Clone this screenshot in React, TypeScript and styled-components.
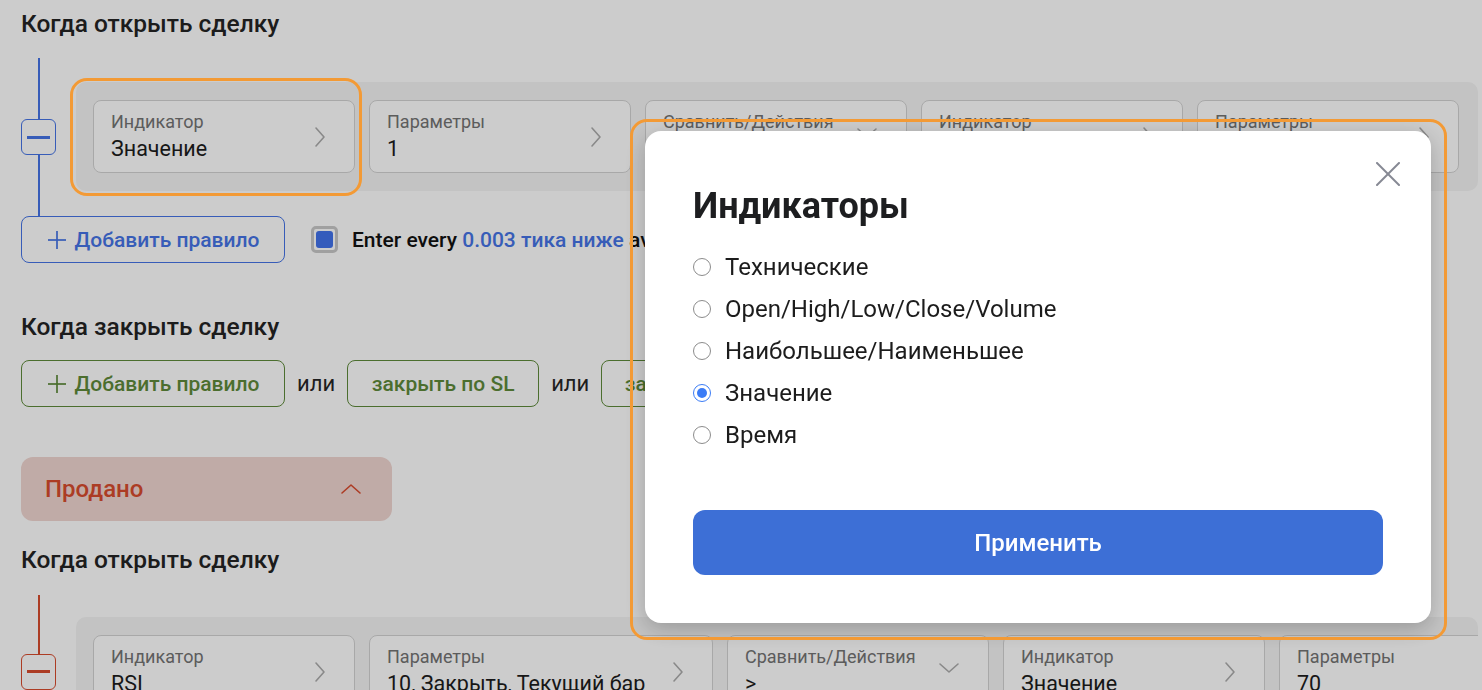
import styled, { createGlobalStyle } from "styled-components";

const BLUE = "#4574e6";
const GREEN = "#5e8a3a";
const RED = "#d84b2e";

const GlobalStyle = createGlobalStyle`
  html, body {
    margin: 0;
    padding: 0;
    background: #ffffff;
    overflow: hidden;
  }
  body {
    font-family: Roboto, "Noto Sans", "Liberation Sans", sans-serif;
    color: #242424;
  }
  * {
    box-sizing: border-box;
  }
`;

const Page = styled.div`
  width: 1482px;
  height: 690px;
  overflow: hidden;
  padding: 10px 4px 0 21px;
  display: flex;
  flex-direction: column;

  & > * {
    flex-shrink: 0;
  }
`;

const Heading = styled.h2<{ $gap?: number }>`
  margin: ${(p) => p.$gap ?? 0}px 0 0;
  font-size: 24.5px;
  line-height: 28px;
  font-weight: 500;
  color: #242424;
`;

const RuleRow = styled.div<{ $gap: number }>`
  display: flex;
  gap: 20px;
  margin-top: ${(p) => p.$gap}px;
`;

const Rail = styled.div`
  width: 35px;
  flex-shrink: 0;
  display: flex;
  flex-direction: column;
  align-items: center;
`;

const RailLine = styled.div<{ $color: string }>`
  flex: 1;
  width: 2px;
  background: ${(p) => p.$color};
`;

const MinusButton = styled.button<{ $color: string }>`
  width: 35px;
  height: 36px;
  padding: 0;
  border: 1px solid ${(p) => p.$color};
  border-radius: 6px;
  background: #ffffff;
  display: flex;
  align-items: center;
  justify-content: center;

  span {
    width: 23px;
    height: 3px;
    background: ${(p) => p.$color};
  }
`;

const Conditions = styled.div<{ $top: number; $bottom: number }>`
  flex: 1;
  min-width: 0;
  margin: ${(p) => p.$top}px 0 ${(p) => p.$bottom}px;
  padding: 18px 17px;
  background: #f4f4f4;
  border-radius: 10px;
  display: flex;
  gap: 14px;
  overflow: hidden;
`;

const Field = styled.div<{ $width?: number }>`
  width: ${(p) => p.$width ?? 262}px;
  height: 73px;
  flex-shrink: 0;
  background: #ffffff;
  border: 1px solid #d3d3d3;
  border-radius: 8px;
  padding: 0 28px 0 17px;
  display: flex;
  align-items: center;
  justify-content: space-between;
`;

const FieldText = styled.div`
  align-self: stretch;
  padding-top: 11px;
  display: flex;
  flex-direction: column;
  gap: 5px;
  white-space: nowrap;
`;

const FieldLabel = styled.span`
  font-size: 18px;
  line-height: 20px;
  color: #737373;
`;

const FieldValue = styled.span`
  font-size: 21.5px;
  line-height: 24px;
  color: #1c1c1c;
`;

const Chevron = styled.svg<{ $color?: string }>`
  flex-shrink: 0;
  fill: none;
  stroke: ${(p) => p.$color ?? "#acacac"};
  stroke-width: 1.6;
  stroke-linecap: round;
  stroke-linejoin: round;
`;

const ChevronRight = () => (
  <Chevron width="12" height="22" viewBox="0 0 12 22">
    <polyline points="2,2 10,11 2,20" />
  </Chevron>
);

const ChevronDown = () => (
  <Chevron width="22" height="12" viewBox="0 0 22 12" style={{ marginTop: -8 }}>
    <polyline points="2,2 11,10 20,2" />
  </Chevron>
);

const ActionsRow = styled.div<{ $gap?: number }>`
  display: flex;
  align-items: center;
  gap: 12px;
  margin-top: ${(p) => p.$gap ?? 0}px;
  white-space: nowrap;
`;

const OutlineButton = styled.button<{ $color: string; $width: number }>`
  width: ${(p) => p.$width}px;
  height: 47px;
  flex-shrink: 0;
  padding: 0;
  border: 1px solid ${(p) => p.$color};
  border-radius: 8px;
  background: #ffffff;
  color: ${(p) => p.$color};
  font-family: inherit;
  font-size: 21px;
  font-weight: 500;
  display: flex;
  align-items: center;
  justify-content: center;
  gap: 8px;

  svg {
    stroke: ${(p) => p.$color};
  }
`;

const PlusIcon = () => (
  <svg width="20" height="20" viewBox="0 0 20 20" fill="none" strokeWidth="1.7">
    <line x1="10" y1="1" x2="10" y2="19" />
    <line x1="1" y1="10" x2="19" y2="10" />
  </svg>
);

const Or = styled.span`
  font-size: 22px;
  color: #262626;
`;

const CheckBox = styled.span`
  width: 27px;
  height: 27px;
  margin-left: 14px;
  border: 3px solid #c9c9c9;
  border-radius: 5px;
  padding: 2px;
  display: flex;

  &::after {
    content: "";
    flex: 1;
    border-radius: 3px;
    background: #4272ec;
  }
`;

const EnterText = styled.span`
  margin-left: 2px;
  font-size: 21px;
  font-weight: 500;
  color: #111111;

  b {
    font-weight: 500;
    color: ${BLUE};
  }
`;

const SidePanel = styled.div`
  width: 371px;
  height: 64px;
  margin-top: 50px;
  padding: 0 30px 0 24px;
  border-radius: 12px;
  background: #f1d6d1;
  display: flex;
  align-items: center;
  justify-content: space-between;
  color: ${RED};
  font-size: 24px;
  font-weight: 500;
`;

const Overlay = styled.div`
  position: fixed;
  inset: 0;
  background: rgba(0, 0, 0, 0.2);
  z-index: 10;
`;

const Modal = styled.div`
  position: fixed;
  left: 645px;
  top: 131px;
  width: 786px;
  height: 492px;
  padding: 55px 48px 48px;
  background: #ffffff;
  border-radius: 16px;
  box-shadow: 0 6px 22px rgba(0, 0, 0, 0.22);
  z-index: 20;
  display: flex;
  flex-direction: column;
`;

const CloseButton = styled.button`
  position: absolute;
  top: 31px;
  right: 31px;
  width: 24px;
  height: 24px;
  padding: 0;
  border: none;
  background: transparent;
`;

const ModalTitle = styled.h1`
  margin: 0;
  font-size: 36px;
  line-height: 40px;
  font-weight: 700;
  color: #1d1e20;
`;

const RadioList = styled.div`
  margin-top: 20px;
  display: flex;
  flex-direction: column;
`;

const RadioItem = styled.label`
  height: 42px;
  display: flex;
  align-items: center;
  gap: 14px;
  font-size: 24px;
  line-height: 28px;
  color: #1c1c1c;
`;

const Radio = styled.input`
  appearance: none;
  flex-shrink: 0;
  margin: 0;
  width: 18px;
  height: 18px;
  border: 1.5px solid #8c8c8c;
  border-radius: 50%;
  display: grid;
  place-items: center;

  &:checked {
    border-color: #3b7cf6;
  }
  &:checked::after {
    content: "";
    width: 10px;
    height: 10px;
    border-radius: 50%;
    background: #3b7cf6;
  }
`;

const ApplyButton = styled.button`
  margin-top: auto;
  height: 65px;
  border: none;
  border-radius: 12px;
  background: #3d6fd6;
  color: #ffffff;
  font-family: inherit;
  font-size: 24px;
  font-weight: 500;
`;

const Highlight = styled.div<{ $x: number; $y: number; $w: number; $h: number }>`
  position: fixed;
  left: ${(p) => p.$x}px;
  top: ${(p) => p.$y}px;
  width: ${(p) => p.$w}px;
  height: ${(p) => p.$h}px;
  border: 3px solid #f39a35;
  border-radius: 17px;
  z-index: 30;
  pointer-events: none;
`;

type FieldData = { label: string; value: string; width?: number; select?: boolean };

const openRules: FieldData[] = [
  { label: "Индикатор", value: "Значение" },
  { label: "Параметры", value: "1" },
  { label: "Сравнить/Действия", value: "<", select: true },
  { label: "Индикатор", value: "Значение" },
  { label: "Параметры", value: "1" },
];

const sellRules: FieldData[] = [
  { label: "Индикатор", value: "RSI" },
  { label: "Параметры", value: "10, Закрыть, Текущий бар", width: 344 },
  { label: "Сравнить/Действия", value: ">", select: true },
  { label: "Индикатор", value: "Значение" },
  { label: "Параметры", value: "70" },
];

const indicatorKinds = ["Технические", "Open/High/Low/Close/Volume", "Наибольшее/Наименьшее", "Значение", "Время"];

const Rule = ({ fields, color, top, bottom }: { fields: FieldData[]; color: string; top: number; bottom: number }) => (
  <>
    <Rail>
      <RailLine $color={color} />
      <MinusButton $color={color}>
        <span />
      </MinusButton>
      <RailLine $color={color} />
    </Rail>
    <Conditions $top={top} $bottom={bottom}>
      {fields.map((f, i) => (
        <Field key={i} $width={f.width}>
          <FieldText>
            <FieldLabel>{f.label}</FieldLabel>
            <FieldValue>{f.value}</FieldValue>
          </FieldText>
          {f.select ? <ChevronDown /> : <ChevronRight />}
        </Field>
      ))}
    </Conditions>
  </>
);

export default function App() {
  return (
    <>
      <GlobalStyle />
      <Page>
        <Heading>Когда открыть сделку</Heading>
        <RuleRow $gap={20}>
          <Rule fields={openRules} color={BLUE} top={24} bottom={25} />
        </RuleRow>
        <ActionsRow>
          <OutlineButton $color={BLUE} $width={264}>
            <PlusIcon />
            Добавить правило
          </OutlineButton>
          <CheckBox />
          <EnterText>
            Enter every <b>0.003 тика ниже</b> average price
          </EnterText>
        </ActionsRow>

        <Heading $gap={50}>Когда закрыть сделку</Heading>
        <ActionsRow $gap={19}>
          <OutlineButton $color={GREEN} $width={264}>
            <PlusIcon />
            Добавить правило
          </OutlineButton>
          <Or>или</Or>
          <OutlineButton $color={GREEN} $width={192}>
            закрыть по SL
          </OutlineButton>
          <Or>или</Or>
          <OutlineButton $color={GREEN} $width={192}>
            закрыть по TP
          </OutlineButton>
        </ActionsRow>

        <SidePanel>
          Продано
          <Chevron width="22" height="12" viewBox="0 0 22 12" $color={RED} strokeWidth={2}>
            <polyline points="2,10 11,2 20,10" />
          </Chevron>
        </SidePanel>

        <Heading $gap={25}>Когда открыть сделку</Heading>
        <RuleRow $gap={21}>
          <Rule fields={sellRules} color={RED} top={22} bottom={22} />
        </RuleRow>
      </Page>

      <Overlay />

      <Modal>
        <CloseButton aria-label="Закрыть">
          <svg width="24" height="24" viewBox="0 0 24 24" fill="none" stroke="#868994" strokeWidth="2" strokeLinecap="round">
            <line x1="1" y1="1" x2="23" y2="23" />
            <line x1="23" y1="1" x2="1" y2="23" />
          </svg>
        </CloseButton>
        <ModalTitle>Индикаторы</ModalTitle>
        <RadioList>
          {indicatorKinds.map((kind) => (
            <RadioItem key={kind}>
              <Radio type="radio" name="indicator" defaultChecked={kind === "Значение"} />
              {kind}
            </RadioItem>
          ))}
        </RadioList>
        <ApplyButton>Применить</ApplyButton>
      </Modal>

      <Highlight $x={70} $y={78} $w={292} $h={118} />
      <Highlight $x={630} $y={119} $w={817} $h={521} />
    </>
  );
}
